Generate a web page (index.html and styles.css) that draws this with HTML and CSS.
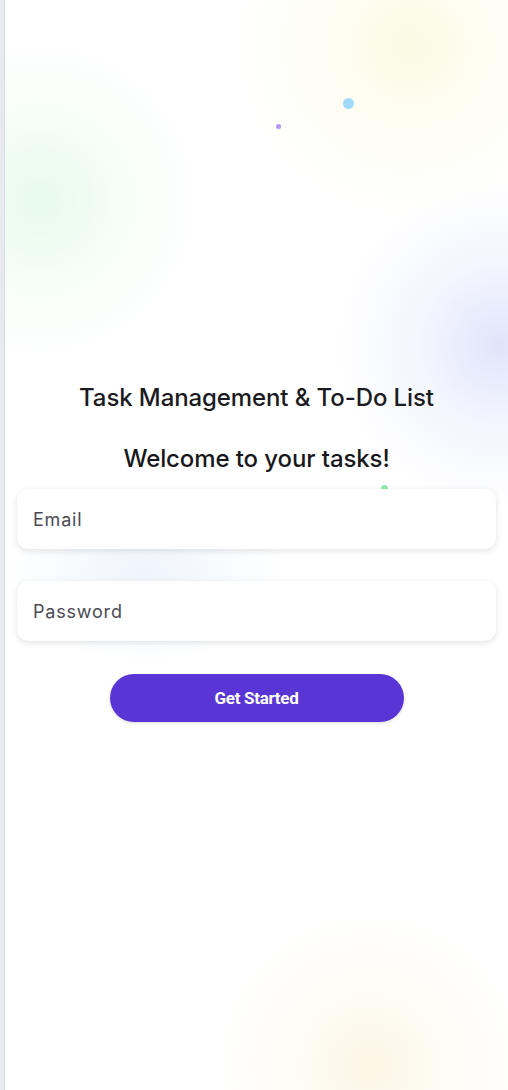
FILE: index.html
```html
<!DOCTYPE html>
<html lang="en">
<head>
<meta charset="utf-8">
<title>Task Management & To-Do List</title>
<link rel="stylesheet" href="styles.css">
</head>
<body>
<div class="frame">
  <div class="rail"></div>
  <main class="app">
    <span class="dot dot-blue"></span>
    <span class="dot dot-purple"></span>
    <span class="dot dot-green"></span>
    <span class="dot dot-teal"></span>
    <section class="login">
      <h1 class="title">Task Management &amp; To-Do List</h1>
      <h2 class="welcome">Welcome to your tasks!</h2>
      <form class="form">
        <input class="field" type="email" placeholder="Email">
        <input class="field" type="password" placeholder="Password">
        <button class="cta" type="button">Get Started</button>
      </form>
    </section>
  </main>
</div>
</body>
</html>
```

FILE: styles.css
```css
* { box-sizing: border-box; }
html, body { margin: 0; padding: 0; height: 100%; }
body { font-family: "Inter", "Noto Sans", sans-serif; background: #fff; }

.frame {
  display: flex;
  height: 1090px;
}
.rail {
  width: 5px;
  flex: none;
  background: #e7eaf0;
  border-right: 1px solid #d9dce3;
}
.app {
  flex: 1;
  position: relative;
  overflow: hidden;
  background:
    radial-gradient(circle at 405px 45px, rgba(250,247,210,0.6) 0, rgba(252,250,225,0.35) 90px, rgba(255,255,255,0) 175px),
    radial-gradient(circle at 35px 200px, rgba(215,248,222,0.6) 0, rgba(228,250,233,0.35) 80px, rgba(255,255,255,0) 165px),
    radial-gradient(circle at 495px 345px, rgba(218,224,250,0.85) 0, rgba(230,234,252,0.45) 80px, rgba(255,255,255,0) 165px),
    radial-gradient(ellipse 140px 90px at 140px 575px, rgba(228,238,250,0.6) 0, rgba(255,255,255,0) 100%),
    radial-gradient(circle at 365px 1065px, rgba(250,240,212,0.6) 0, rgba(252,246,228,0.35) 80px, rgba(255,255,255,0) 155px),
    #fff;
}

.dot { position: absolute; border-radius: 50%; }
.dot-blue { width: 11px; height: 11px; left: 338px; top: 98px; background: #a2dbf8; }
.dot-purple { width: 5px; height: 5px; left: 271px; top: 124px; background: #b597f6; }
.dot-green { width: 7px; height: 7px; left: 376px; top: 485px; background: #8fe8a8; }
.dot-teal { width: 6px; height: 6px; left: 235px; top: 543px; background: #a7e0ee; }

.login {
  position: relative;
  padding: 382px 12px 0;
  display: flex;
  flex-direction: column;
  align-items: center;
}
.title {
  margin: 0;
  font-family: "Inter", "Noto Sans", sans-serif;
  font-size: 24px;
  font-weight: 500;
  line-height: 32px;
  color: #1b1b1f;
  letter-spacing: -0.1px;
}
.welcome {
  margin: 29px 0 0;
  font-family: "Inter", "Noto Sans", sans-serif;
  font-size: 24px;
  font-weight: 500;
  line-height: 32px;
  color: #18181c;
  letter-spacing: -0.1px;
}
.form {
  align-self: stretch;
  margin-top: 14px;
  display: flex;
  flex-direction: column;
  align-items: center;
  gap: 32px;
}
.field {
  width: 100%;
  height: 60px;
  border: none;
  border-radius: 11px;
  background: #fff;
  box-shadow: 0 2px 6px rgba(0,0,0,0.11), 0 0 1px rgba(0,0,0,0.06);
  padding: 0 16px;
  font-family: "Inter", "Noto Sans", sans-serif;
  font-size: 18px;
  letter-spacing: 0.8px;
  color: #4a4a55;
  outline: none;
}
.field::placeholder { color: #4a4a55; opacity: 1; }
.cta {
  width: 294px;
  height: 48px;
  margin-top: 1px;
  border: none;
  border-radius: 24px;
  background: #5935d5;
  color: #fff;
  font-family: "Roboto", "Liberation Sans", sans-serif;
  font-size: 17px;
  font-weight: 700;
  letter-spacing: -0.3px;
  box-shadow: 0 1px 3px rgba(0,0,0,0.15);
  cursor: pointer;
}
```
